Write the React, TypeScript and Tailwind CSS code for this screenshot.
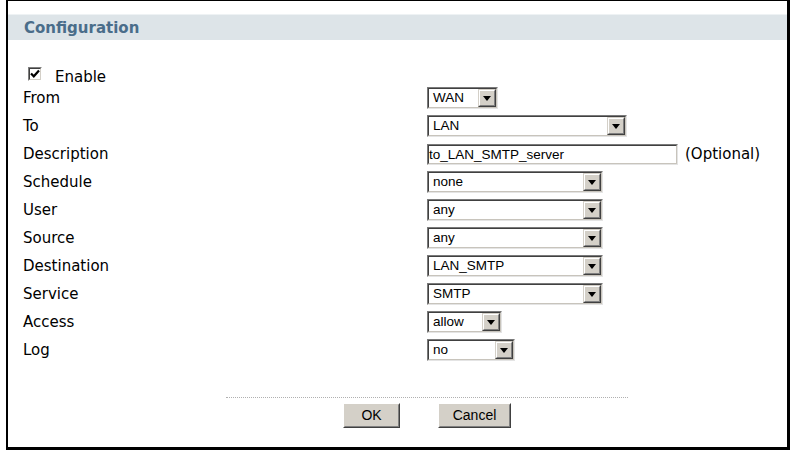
import React from "react";

const labelFont = { fontFamily: '"DejaVu Sans", Verdana, sans-serif' };
const ctrlFont = { fontFamily: '"Liberation Sans", Arial, sans-serif' };

function Select({ value, width }: { value: string; width: string }) {
  return (
    <div
      className={`${width} h-[22px] flex border border-t-[#7a7a7a] border-l-[#7a7a7a] border-b-[#e4e4e4] border-r-[#e4e4e4]`}
    >
      <div className="flex-1 flex border border-t-[#404040] border-l-[#404040] border-b-[#c8c4bc] border-r-[#c8c4bc] bg-white min-w-0">
        <span
          className="flex-1 pl-[4px] text-[13.5px] leading-[18px] text-black truncate"
          style={ctrlFont}
        >
          {value}
        </span>
        <span className="w-[18px] h-full flex border border-t-[#d4d0c8] border-l-[#d4d0c8] border-b-[#404040] border-r-[#404040]">
          <span className="flex-1 flex items-center justify-center bg-[#d4d0c8] border border-t-white border-l-white border-b-[#808080] border-r-[#808080]">
            <svg width="8" height="5" viewBox="0 0 8 5" aria-hidden="true">
              <path d="M0 0H8L4 5Z" fill="#000" />
            </svg>
          </span>
        </span>
      </div>
    </div>
  );
}

function TextInput({ value, width }: { value: string; width: string }) {
  return (
    <div
      className={`${width} h-[21px] flex border border-t-[#7a7a7a] border-l-[#7a7a7a] border-b-[#e4e4e4] border-r-[#e4e4e4]`}
    >
      <div className="flex-1 border border-t-[#404040] border-l-[#404040] border-b-[#c8c4bc] border-r-[#c8c4bc] bg-white">
        <span className="block text-[13.5px] leading-[17px] text-black" style={ctrlFont}>
          {value}
        </span>
      </div>
    </div>
  );
}

function Button({ label, width }: { label: string; width: string }) {
  return (
    <div
      className={`${width} h-[25px] flex border border-t-white border-l-white border-b-[#404040] border-r-[#404040]`}
    >
      <div
        className="flex-1 flex items-center justify-center bg-[#d4d0c8] border border-t-[#d4d0c8] border-l-[#d4d0c8] border-b-[#808080] border-r-[#808080] text-[14px] text-black"
        style={ctrlFont}
      >
        {label}
      </div>
    </div>
  );
}

const rows: { label: string; control: React.ReactNode }[] = [
  { label: "From", control: <Select value="WAN" width="w-[71px]" /> },
  { label: "To", control: <Select value="LAN" width="w-[200px]" /> },
  {
    label: "Description",
    control: (
      <div className="flex items-center gap-[7px]">
        <TextInput value="to_LAN_SMTP_server" width="w-[251px]" />
        <span className="text-[15px] text-black" style={labelFont}>
          (Optional)
        </span>
      </div>
    ),
  },
  { label: "Schedule", control: <Select value="none" width="w-[176px]" /> },
  { label: "User", control: <Select value="any" width="w-[176px]" /> },
  { label: "Source", control: <Select value="any" width="w-[176px]" /> },
  { label: "Destination", control: <Select value="LAN_SMTP" width="w-[176px]" /> },
  { label: "Service", control: <Select value="SMTP" width="w-[176px]" /> },
  { label: "Access", control: <Select value="allow" width="w-[75px]" /> },
  { label: "Log", control: <Select value="no" width="w-[88px]" /> },
];

export default function App() {
  return (
    <div className="w-[793px] h-[451px] bg-white overflow-hidden" style={labelFont}>
      <div className="ml-[6px] w-[784px] h-[450px] border-l-2 border-r-[3px] border-t border-b-[3px] border-black flex flex-col">
        {/* header */}
        <div className="mt-[13px] h-[26px] bg-[#dde4e8] border-t border-[#eef2f4] pl-[16px] pt-[2px] flex items-center">
          <span className="text-[15px] font-bold text-[#4a6d8a]">Configuration</span>
        </div>

        {/* enable */}
        <div className="mt-[23px] h-[21px] pl-[20px] flex items-center gap-[13px]">
          <span className="w-[14px] h-[14px] flex border border-t-[#808080] border-l-[#808080] border-b-white border-r-white">
            <span className="flex-1 flex items-center justify-center bg-white border border-t-[#404040] border-l-[#404040] border-b-[#d4d0c8] border-r-[#d4d0c8]">
              <svg width="10" height="9" viewBox="0 0 10 9" aria-hidden="true">
                <path d="M1 4.5L3.8 7.3L9 1.5" stroke="#000" strokeWidth="2.2" fill="none" />
              </svg>
            </span>
          </span>
          <span className="text-[15px] text-black mt-[7px]">Enable</span>
        </div>

        {/* rows */}
        {rows.map((r) => (
          <div key={r.label} className="h-[28px] pl-[15px] flex items-center">
            <span className="w-[404px] text-[15px] text-black">{r.label}</span>
            {r.control}
          </div>
        ))}

        {/* footer */}
        <div className="mt-[33px] ml-[218px] w-[402px] border-t border-dotted border-[#b0b0b0]" />
        <div className="mt-[5px] ml-[218px] w-[402px] flex justify-center gap-[38px]">
          <Button label="OK" width="w-[57px]" />
          <Button label="Cancel" width="w-[73px]" />
        </div>
      </div>
    </div>
  );
}
